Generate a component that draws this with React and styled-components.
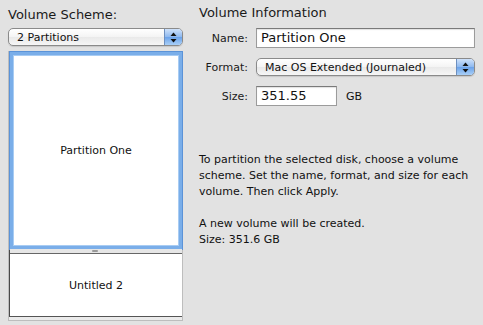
import React from 'react';
import styled, { createGlobalStyle } from 'styled-components';

const GlobalStyle = createGlobalStyle`
  body {
    margin: 0;
    background: #e2e2e2;
    font-family: "DejaVu Sans", "Liberation Sans", sans-serif;
    color: #111;
  }
`;

const Page = styled.div`
  width: 483px;
  height: 325px;
  display: flex;
  box-sizing: border-box;
  padding: 0 8px 0 8px;
  gap: 16px;
  overflow: hidden;
`;

const LeftColumn = styled.div`
  width: 175px;
  display: flex;
  flex-direction: column;
  padding-top: 6px;
`;

const RightColumn = styled.div`
  flex: 1;
  display: flex;
  flex-direction: column;
  padding-top: 4px;
`;

const Heading = styled.div`
  font-size: 13px;
  line-height: 17px;
  color: #1a1a1a;
  margin-bottom: ${({ $gap }) => $gap}px;
`;

const PopupBox = styled.div`
  display: flex;
  align-items: center;
  height: 18px;
  width: ${({ $width }) => $width}px;
  box-sizing: border-box;
  border: 1px solid #8a8a8a;
  border-radius: 5px;
  background: linear-gradient(#ffffff, #f4f4f4 50%, #e9e9e9 51%, #f6f6f6);
  box-shadow: 0 1px 1px rgba(0, 0, 0, 0.12);
  overflow: hidden;
`;

const PopupLabel = styled.span`
  flex: 1;
  font-size: 11px;
  padding-left: 8px;
  white-space: nowrap;
`;

const Stepper = styled.span`
  width: 17px;
  height: 100%;
  display: flex;
  align-items: center;
  justify-content: center;
  border-left: 1px solid #6d8fbf;
  background: linear-gradient(#cfe2fb, #8db8ef 50%, #6aa2ea 51%, #a9cff7);
`;

const Arrows = () => (
  <svg width="7" height="11" viewBox="0 0 7 11">
    <path d="M3.5 0.5 L6.5 4 L0.5 4 Z" fill="#111" />
    <path d="M3.5 10.5 L6.5 7 L0.5 7 Z" fill="#111" />
  </svg>
);

const Popup = ({ label, width }) => (
  <PopupBox $width={width}>
    <PopupLabel>{label}</PopupLabel>
    <Stepper>
      <Arrows />
    </Stepper>
  </PopupBox>
);

const MapFrame = styled.div`
  margin-top: 5px;
  height: 270px;
  box-sizing: border-box;
  border: 1px solid #bdbdbd;
  border-top: none;
  background: #ebebeb;
  padding-bottom: 3px;
  display: flex;
`;

const PartitionMap = styled.div`
  flex: 1;
  display: flex;
  flex-direction: column;
  background: #fff;
  border-left: 1px solid #4a4a4a;
  border-top: 1px solid #8f8f8f;
  border-bottom: 1px solid #555;
`;

const Partition = styled.div`
  display: flex;
  align-items: center;
  justify-content: center;
  font-size: 11px;
  color: #111;
  background: #fff;
  box-sizing: border-box;
  height: ${({ $height }) => ($height ? `${$height}px` : 'auto')};
  flex: ${({ $height }) => ($height ? 'none' : '1')};
  border: ${({ $selected }) => ($selected ? '3px solid #7aaee9' : 'none')};
  box-shadow: ${({ $selected }) =>
    $selected ? 'inset 0 0 0 1px #a8ccf3, 0 0 0 1px #5b93d8' : 'none'};
  border-top: ${({ $selected }) => ($selected ? '3px solid #7aaee9' : '1px solid #666')};
`;

const Divider = styled.div`
  height: 4px;
  background: #e6e6e6;
  display: flex;
  justify-content: center;
  align-items: flex-start;
`;

const Handle = styled.span`
  width: 6px;
  height: 2px;
  margin-top: 1px;
  margin-left: -2px;
  background: #9a9a9a;
  border-radius: 1px;
`;

const Form = styled.div`
  display: grid;
  grid-template-columns: 49px 1fr;
  column-gap: 8px;
  row-gap: 10px;
  align-items: center;
  margin-top: 7px;
`;

const Label = styled.div`
  font-size: 11px;
  text-align: right;
  color: #1a1a1a;
`;

const FieldRow = styled.div`
  display: flex;
  align-items: center;
  gap: 9px;
`;

const TextField = styled.div`
  width: ${({ $width }) => $width}px;
  height: 20px;
  box-sizing: border-box;
  border: 1px solid #9b9b9b;
  border-top-color: #7a7a7a;
  background: #fff;
  box-shadow: inset 0 1px 1px rgba(0, 0, 0, 0.12);
  font-size: 13px;
  line-height: 18px;
  padding-left: 4px;
  white-space: nowrap;
`;

const Unit = styled.span`
  font-size: 11px;
`;

const Note = styled.p`
  margin: ${({ $top }) => $top}px 0 0 0;
  font-size: 11px;
  line-height: 16px;
  color: #111;
`;

export default function App() {
  return (
    <>
      <GlobalStyle />
      <Page>
        <LeftColumn>
          <Heading $gap={5}>Volume Scheme:</Heading>
          <Popup label="2 Partitions" width={175} />
          <MapFrame>
            <PartitionMap>
              <Partition $selected $height={197}>Partition One</Partition>
              <Divider>
                <Handle />
              </Divider>
              <Partition>Untitled 2</Partition>
            </PartitionMap>
          </MapFrame>
        </LeftColumn>
        <RightColumn>
          <Heading $gap={0}>Volume Information</Heading>
          <Form>
            <Label>Name:</Label>
            <TextField $width={219}>Partition One</TextField>
            <Label>Format:</Label>
            <Popup label="Mac OS Extended (Journaled)" width={219} />
            <Label>Size:</Label>
            <FieldRow>
              <TextField $width={81}>351.55</TextField>
              <Unit>GB</Unit>
            </FieldRow>
          </Form>
          <Note $top={46}>
            To partition the selected disk, choose a volume scheme. Set the name, format, and size for each
            volume. Then click Apply.
          </Note>
          <Note $top={16}>
            A new volume will be created.
            <br />
            Size: 351.6 GB
          </Note>
        </RightColumn>
      </Page>
    </>
  );
}
